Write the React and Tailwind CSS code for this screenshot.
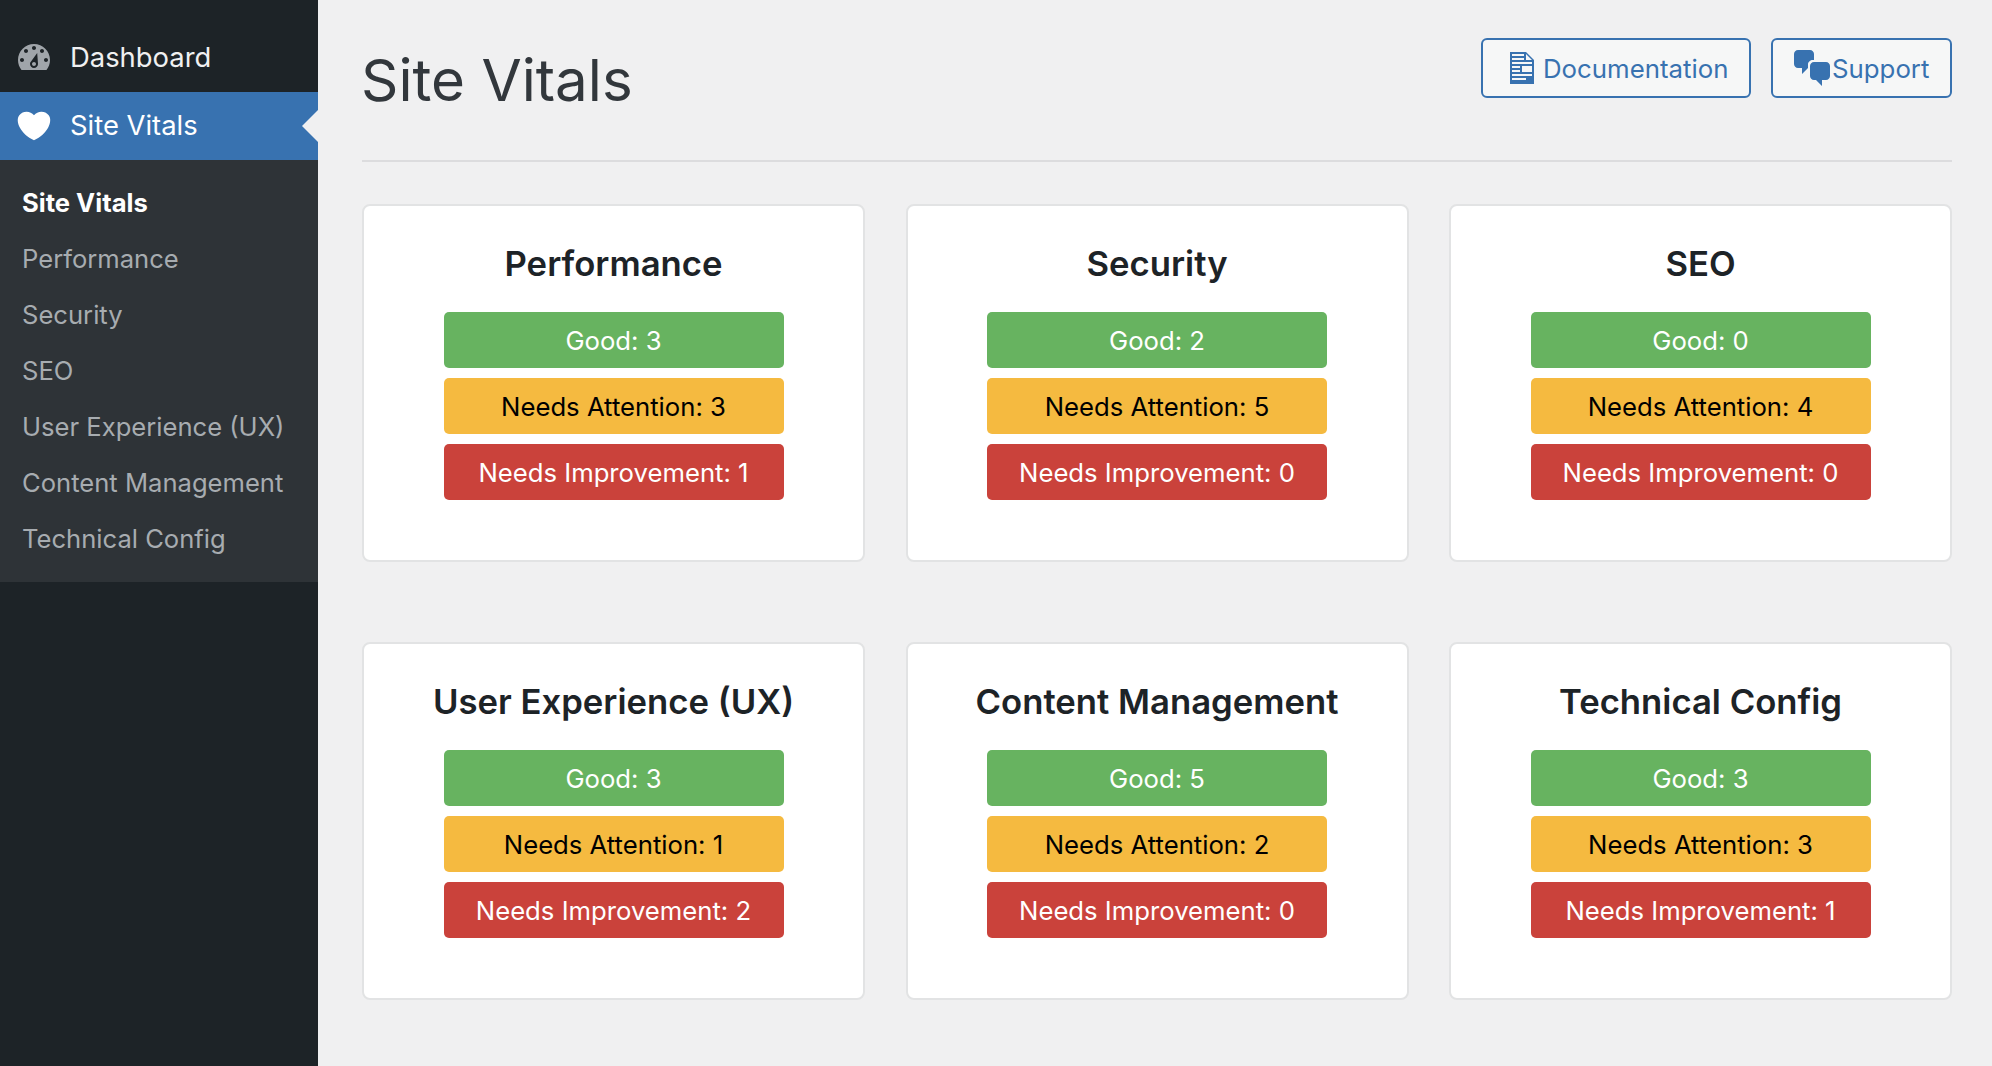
const font = { fontFamily: 'Inter, "Liberation Sans", sans-serif' };

const sub = ["Site Vitals", "Performance", "Security", "SEO", "User Experience (UX)", "Content Management", "Technical Config"];

const cards = [
  ["Performance", 3, 3, 1],
  ["Security", 2, 5, 0],
  ["SEO", 0, 4, 0],
  ["User Experience (UX)", 3, 1, 2],
  ["Content Management", 5, 2, 0],
  ["Technical Config", 3, 3, 1],
];

function Dash({ className, d }) {
  return (
    <svg viewBox="0 0 20 20" className={className} fill="currentColor" fillRule="evenodd">
      <path d={d} />
    </svg>
  );
}

const gauge = "M3.76 16h12.48c1.1-1.37 1.76-3.11 1.76-5 0-4.42-3.58-8-8-8s-8 3.58-8 8c0 1.89.66 3.63 1.76 5zM10 4c.55 0 1 .45 1 1s-.45 1-1 1-1-.45-1-1 .45-1 1-1zM6 5.5c.55 0 1 .45 1 1s-.45 1-1 1-1-.45-1-1 .45-1 1-1zm8 0c.55 0 1 .45 1 1s-.45 1-1 1-1-.45-1-1 .45-1 1-1zM4 10c.55 0 1 .45 1 1s-.45 1-1 1-1-.45-1-1 .45-1 1-1zm12 0c.55 0 1 .45 1 1s-.45 1-1 1-1-.45-1-1 .45-1 1-1zM11.6 7.5L12 13c0 1.1-.9 2-2 2s-2-.9-2-2c0-.6.3-1.1.7-1.5zM10 12c-.55 0-1 .45-1 1s.45 1 1 1 1-.45 1-1-.45-1-1-1z";
const heart = "M10 17.12c3.33-1.4 5.74-3.79 7.04-6.21 1.28-2.41 1.46-4.81.32-6.25-1.03-1.29-2.37-1.78-3.73-1.74s-2.68.63-3.63 1.74c-.95-1.11-2.27-1.7-3.63-1.74s-2.7.45-3.73 1.74c-1.14 1.44-.96 3.84.32 6.25 1.3 2.42 3.71 4.81 7.04 6.21z";
const doc = "M12 2l4 4v12H4V2h8zM5 3v1h6V3H5zm7 3h3l-3-3v3zM5 5v1h6V5H5zm10 3V7H5v1h10zM5 9v1h4V9H5zm10 3V9h-5v3h5zM5 11v1h4v-1H5zm10 3v-1H5v1h10zm-3 2v-1H5v1h7z";
const chat = "M11 6h-.82C9.07 6 8 7.2 8 8.16V10l-3 3v-3H3c-1.1 0-2-.9-2-2V3c0-1.1.9-2 2-2h6c1.1 0 2 .9 2 2v3zm0 1h6c1.1 0 2 .9 2 2v5c0 1.1-.9 2-2 2h-2v3l-3-3h-1c-1.1 0-2-.9-2-2V9c0-1.1.9-2 2-2z";

function Card({ title, good, attention, improvement }) {
  return (
    <div className="h-[358px] rounded-[8px] border-2 border-[#e2e3e4] bg-white pt-[31px]">
      <h2 className="text-center text-[34.7px] font-semibold leading-[52px] text-[#1d2327]">{title}</h2>
      <div className="mt-[23px] mx-auto flex w-[340px] flex-col gap-[10px] text-center text-[25.7px]">
        <div className="flex h-[56px] items-center justify-center rounded-[5px] bg-[#67b360] pt-[2px] text-white">Good: {good}</div>
        <div className="flex h-[56px] items-center justify-center rounded-[5px] bg-[#f5ba40] pt-[2px] text-black">Needs Attention: {attention}</div>
        <div className="flex h-[56px] items-center justify-center rounded-[5px] bg-[#ca423b] pt-[2px] text-white">Needs Improvement: {improvement}</div>
      </div>
    </div>
  );
}

export default function App() {
  return (
    <div style={font} className="flex h-[1066px] overflow-hidden bg-[#f0f0f1]">
      <aside className="w-[318px] shrink-0 bg-[#1d2327] pt-[24px]">
        <div className="flex h-[68px] items-center pl-[14px] text-[27.4px] text-[#f0f0f1]">
          <Dash d={gauge} className="h-[40px] w-[40px] shrink-0 text-[#a0a5aa]" />
          <span className="ml-[16px]">Dashboard</span>
        </div>
        <div className="relative flex h-[68px] items-center bg-[#3872b0] pl-[14px] text-[27.4px] text-white">
          <Dash d={heart} className="h-[40px] w-[40px] shrink-0" />
          <span className="ml-[16px]">Site Vitals</span>
          <div className="absolute right-0 top-[18px] h-0 w-0 border-y-[16px] border-r-[16px] border-y-transparent border-r-[#f0f0f1]" />
        </div>
        <ul className="bg-[#2e3337] pt-[15px] pb-[15px] text-[25.6px] text-[#a7acb0]">
          {sub.map((s, i) => (
            <li key={s} className={`flex h-[56px] items-center pl-[22px] ${i === 0 ? "font-bold text-white" : ""}`}>{s}</li>
          ))}
        </ul>
      </aside>
      <main className="flex-1 pl-[44px] pr-[40px]">
        <header className="flex h-[162px] items-start justify-between border-b-2 border-[#dcdcde] pt-[38px]">
          <h1 className="mt-[6px] -ml-[1px] text-[58.3px] font-normal leading-[72px] text-[#32373c]">Site Vitals</h1>
          <div className="flex gap-[20px] text-[25.8px] text-[#3872b0]">
            <a className="flex h-[60px] w-[270px] items-center rounded-[6px] border-2 border-[#3872b0] bg-[#f6f7f7] pl-[19px]">
              <Dash d={doc} className="h-[40px] w-[40px] shrink-0" />
              <span className="ml-[1px] pt-[2px]">Documentation</span>
            </a>
            <a className="flex h-[60px] w-[181px] items-center rounded-[6px] border-2 border-[#3872b0] bg-[#f6f7f7] pl-[19px]">
              <Dash d={chat} className="h-[40px] w-[40px] shrink-0" />
              <span className="pt-[2px]">Support</span>
            </a>
          </div>
        </header>
        <div className="mt-[42px] grid grid-cols-[repeat(3,503px)] gap-x-[40.5px] gap-y-[80px]">
          {cards.map(([t, g, a, m]) => (
            <Card key={t} title={t} good={g} attention={a} improvement={m} />
          ))}
        </div>
      </main>
    </div>
  );
}
